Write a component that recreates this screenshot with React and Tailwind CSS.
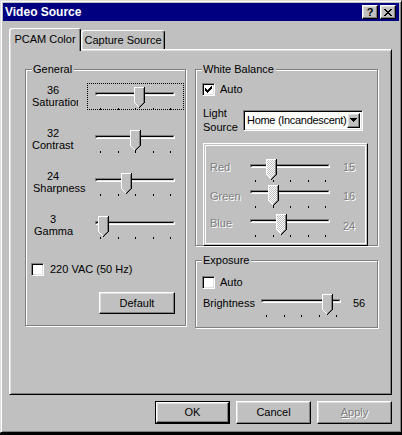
const RAISED =
  'border border-t-white border-l-white border-r-black border-b-black shadow-[inset_-1px_-1px_0_#808080,inset_1px_1px_0_#dfdfdf]';
const SUNKEN =
  'border border-t-[#808080] border-l-[#808080] border-r-white border-b-white shadow-[inset_1px_1px_0_#000,inset_-1px_-1px_0_#dfdfdf]';
const DISABLED_TEXT = 'text-[#808080] [text-shadow:1px_1px_0_#fff]';

const CHECK = ['......x', '.....xx', 'x...xxx', 'xx.xxx.', 'xxxxx..', '.xxx...', '..x....'];
const CLOSE = ['xx....xx', '.xx..xx.', '..xxxx..', '...xx...', '..xxxx..', '.xx..xx.', 'xx....xx'];
const ARROW = ['xxxxxxx', '.xxxxx.', '..xxx..', '...x...'];

// 11x21 trackbar thumb, pointing down
const THUMB = [
  'wwwwwwwwwwk',
  ...Array(15).fill('wffffffffgk'),
  '.wffffffgk.',
  '..wffffgk..',
  '...wffgk...',
  '....wgk....',
  '.....k.....',
];

const GENERAL = [
  { value: 36, name: 'Saturation', focus: true, clip: true, nameMl: 2 },
  { value: 32, name: 'Contrast', nameMl: 2 },
  { value: 24, name: 'Sharpness', nameMl: 3 },
  { value: 3, name: 'Gamma', nameMl: 4 },
];

const BALANCE = [
  { name: 'Red', value: 15, mt: 0, labelMt: 5, valueMt: 5 },
  { name: 'Green', value: 16, mt: 1, labelMt: 8, valueMt: 8 },
  { name: 'Blue', value: 24, mt: 4, labelMt: 6, valueMt: 9 },
];

function Pixels({ rows, color = '#000' }) {
  const w = rows[0].length;
  const h = rows.length;
  return (
    <svg width={w} height={h} viewBox={`0 0 ${w} ${h}`} shapeRendering="crispEdges" className="block">
      {rows.flatMap((r, y) =>
        [...r].map((c, x) =>
          c === 'x' ? <rect key={`${x}-${y}`} x={x} y={y} width="1" height="1" fill={color} /> : null
        )
      )}
    </svg>
  );
}

function Thumb({ disabled }) {
  const fill = (c, x, y) => {
    if (c === 'w') return '#fff';
    if (c === 'k') return '#000';
    if (c === 'g') return '#808080';
    if (c === 'f') return disabled && (x + y) % 2 === 0 ? '#fff' : '#c0c0c0';
    return null;
  };
  return (
    <svg width="11" height="21" viewBox="0 0 11 21" shapeRendering="crispEdges" className="block">
      {THUMB.flatMap((r, y) =>
        [...r].map((c, x) => {
          const f = fill(c, x, y);
          return f ? <rect key={`${x}-${y}`} x={x} y={y} width="1" height="1" fill={f} /> : null;
        })
      )}
    </svg>
  );
}

function Slider({ value, disabled }) {
  const left = Math.round((70 * value) / 64);
  return (
    <div className="relative w-[80px] h-[26px]">
      <div className="pt-[8px]">
        <div className="h-[4px] border border-t-[#808080] border-l-[#808080] border-b-white border-r-white">
          <div className="h-[2px] border border-t-black border-l-black border-b-[#dfdfdf] border-r-[#dfdfdf]" />
        </div>
      </div>
      <div className="flex justify-between pl-[5px] pr-[4px] mt-[12px]">
        {[0, 1, 2, 3, 4].map((i) => (
          <span key={i} className="block w-[1px] h-[2px] bg-black" />
        ))}
      </div>
      <div className="absolute top-[3px]" style={{ left }}>
        <Thumb disabled={disabled} />
      </div>
    </div>
  );
}

function Checkbox({ checked }) {
  return (
    <div className={`w-[13px] h-[13px] bg-white ${SUNKEN} flex items-center justify-center`}>
      {checked && <Pixels rows={CHECK} />}
    </div>
  );
}

function Group({ label, className = '', children }) {
  return (
    <div className={`relative border border-[#808080] shadow-[inset_1px_1px_0_#fff,1px_1px_0_#fff] ${className}`}>
      <span className="absolute left-[6px] -top-[7px] pl-[1px] pr-[2px] bg-[#c0c0c0] leading-[13px]">{label}</span>
      {children}
    </div>
  );
}

function Button({ children, isDefault, className = '' }) {
  if (isDefault) {
    return (
      <div className={`w-[75px] h-[23px] border border-black ${className}`}>
        <div className={`h-full ${RAISED} flex items-center justify-center`}>{children}</div>
      </div>
    );
  }
  return (
    <div className={`w-[75px] h-[23px] ${RAISED} flex items-center justify-center ${className}`}>{children}</div>
  );
}

function CaptionButton({ children, className = '' }) {
  return (
    <div className={`w-[16px] h-[14px] bg-[#c0c0c0] ${RAISED} flex items-center justify-center ${className}`}>
      {children}
    </div>
  );
}

function GeneralGroup() {
  return (
    <Group label="General" className="w-[161px] h-[257px] pt-[13px]">
      <div className="flex flex-col gap-[16px]">
        {GENERAL.map((row) => (
          <div key={row.name} className="flex items-start">
            <div className="ml-[4px] w-[46px] pt-[1px] leading-[12px]">
              <div className="text-center">{row.value}</div>
              <div
                className={`whitespace-nowrap ${row.clip ? 'w-[46px] overflow-hidden' : ''}`}
                style={{ marginLeft: row.nameMl }}
              >
                {row.name}
              </div>
            </div>
            <div
              className={`ml-[11px] w-[97px] h-[27px] border border-dotted ${
                row.focus ? 'border-black' : 'border-transparent'
              }`}
            >
              <div className="ml-[7px]">
                <Slider value={row.value} />
              </div>
            </div>
          </div>
        ))}
      </div>
      <div className="flex items-center mt-[24px] ml-[5px]">
        <Checkbox />
        <span className="ml-[6px]">220 VAC (50 Hz)</span>
      </div>
      <Button className="mt-[16px] ml-[73px] !w-[76px] !h-[22px]">Default</Button>
    </Group>
  );
}

function WhiteBalanceGroup() {
  return (
    <Group label="White Balance" className="w-[183px] h-[177px] pt-[13px]">
      <div className="flex items-center ml-[6px]">
        <Checkbox checked />
        <span className="ml-[5px]">Auto</span>
      </div>
      <div className="flex items-center mt-[10px] ml-[7px]">
        <div className="w-[40px] leading-[14px]">
          Light
          <br />
          Source
        </div>
        <div className={`w-[120px] h-[21px] bg-white ${SUNKEN} flex items-stretch p-[2px]`}>
          <span className="flex-1 pl-[1px] self-center overflow-hidden whitespace-nowrap tracking-[-0.3px]">
            Home (Incandescent)
          </span>
          <div className={`w-[13px] bg-[#c0c0c0] ${RAISED} flex items-center justify-center`}>
            <Pixels rows={ARROW} />
          </div>
        </div>
      </div>
      <div className="ml-[7px] mt-[9px] w-[165px] h-[103px] border border-t-white border-l-white border-r-black border-b-black p-[1px]">
        <div className="h-full border border-white pt-[10px] pl-[4px]">
          {BALANCE.map((row) => (
            <div key={row.name} className="flex items-start h-[25px]" style={{ marginTop: row.mt }}>
              <span className={`w-[40px] ${DISABLED_TEXT}`} style={{ marginTop: row.labelMt }}>
                {row.name}
              </span>
              <Slider value={row.value} disabled />
              <span className={`ml-[13px] ${DISABLED_TEXT}`} style={{ marginTop: row.valueMt }}>
                {row.value}
              </span>
            </div>
          ))}
        </div>
      </div>
    </Group>
  );
}

function ExposureGroup() {
  return (
    <Group label="Exposure" className="w-[183px] h-[68px] pt-[15px]">
      <div className="flex items-center ml-[6px]">
        <Checkbox />
        <span className="ml-[5px]">Auto</span>
      </div>
      <div className="flex items-start mt-[2px] ml-[7px]">
        <span className="w-[58px] mt-[6px]">Brightness</span>
        <Slider value={56} />
        <span className="ml-[12px] mt-[6px]">56</span>
      </div>
    </Group>
  );
}

export default function App() {
  return (
    <div className="w-[402px] h-[435px] bg-black font-['Liberation_Sans',Arial,sans-serif] text-[11px] leading-[13px] text-black select-none">
      <div className="w-[402px] h-[433px] bg-[#c0c0c0] border border-t-[#dfdfdf] border-l-[#dfdfdf] border-r-black border-b-black shadow-[inset_1px_1px_0_#fff,inset_-1px_-1px_0_#808080] p-[2px] flex flex-col">
        <div className="h-[18px] shrink-0 bg-[#000080] flex items-center pl-[2px] pr-[3px]">
          <span className="flex-1 text-white font-bold text-[12px] leading-[14px]">Video Source</span>
          <CaptionButton>
            <span className="font-bold text-[11px] leading-[11px]">?</span>
          </CaptionButton>
          <CaptionButton className="ml-[2px]">
            <Pixels rows={CLOSE} />
          </CaptionButton>
        </div>

        <div className="ml-[6px] mt-[7px] w-[383px]">
          <div className="relative z-10 flex items-end -mb-[2px]">
            <div className="w-[72px] h-[23px] bg-[#c0c0c0] border-t border-l border-r border-t-white border-l-white border-r-black rounded-t-[3px] shadow-[inset_1px_0_0_#dfdfdf,inset_-1px_0_0_#808080] flex justify-center pt-[4px]">
              PCAM Color
            </div>
            <div className="w-[84px] h-[19px] mb-[2px] border-t border-l border-r border-t-white border-l-white border-r-black rounded-t-[3px] shadow-[inset_1px_0_0_#dfdfdf,inset_-1px_0_0_#808080] flex justify-center pt-[3px]">
              Capture Source
            </div>
          </div>
          <div className="h-[346px] border border-t-white border-l-white border-r-black border-b-black shadow-[inset_1px_1px_0_#dfdfdf,inset_-1px_-1px_0_#808080] flex items-start pl-[15px] pt-[19px] gap-[9px]">
            <GeneralGroup />
            <div className="flex flex-col gap-[14px]">
              <WhiteBalanceGroup />
              <ExposureGroup />
            </div>
          </div>
        </div>

        <div className="ml-[6px] mt-[6px] w-[383px] flex justify-end gap-[6px]">
          <Button isDefault>OK</Button>
          <Button>Cancel</Button>
          <Button>
            <span className={DISABLED_TEXT}>
              <span className="underline">A</span>pply
            </span>
          </Button>
        </div>
      </div>
    </div>
  );
}
